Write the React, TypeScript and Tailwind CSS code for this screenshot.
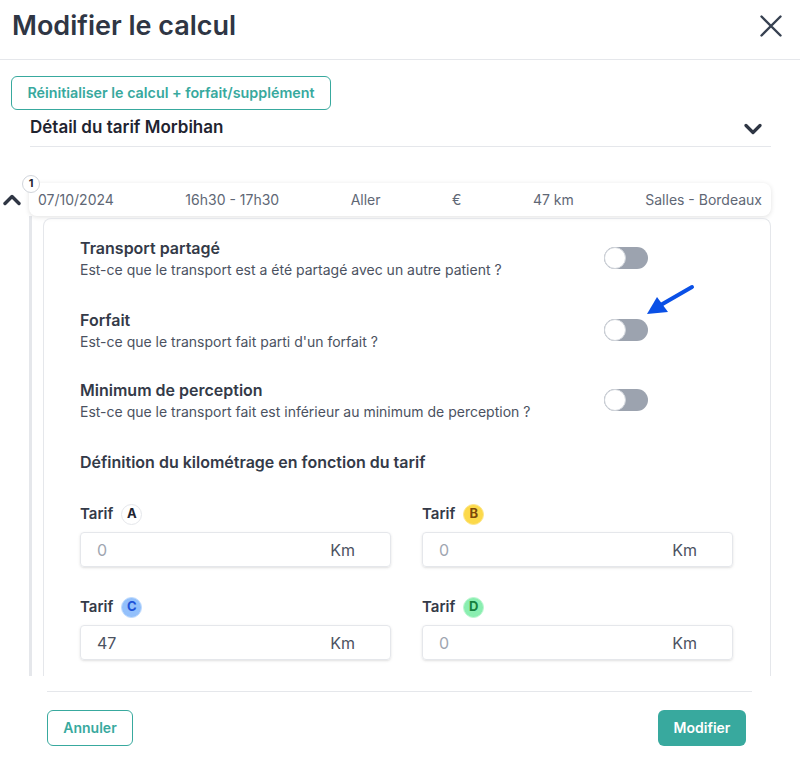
const font = { fontFamily: "Inter, 'Noto Sans', sans-serif" };

function Toggle() {
  return (
    <div className="relative h-[22px] w-[44px] shrink-0 rounded-full bg-[#9ca3af]">
      <div className="absolute left-0 top-0 h-[22px] w-[22px] rounded-full border border-[#d1d5db] bg-white" />
    </div>
  );
}

function OptionRow({ title, desc }: { title: string; desc: string }) {
  return (
    <div className="flex items-center">
      <div className="w-[524px]">
        <div className="text-base font-semibold leading-6 text-[#343a48]">{title}</div>
        <div className="text-sm leading-5 text-[#4b5261]">{desc}</div>
      </div>
      <Toggle />
    </div>
  );
}

function TarifField({
  letter,
  badge,
  value,
}: {
  letter: string;
  badge: string;
  value?: string;
}) {
  return (
    <div>
      <div className="flex h-[22px] items-center gap-2">
        <span className="text-[15px] font-semibold text-[#343a48]">Tarif</span>
        <span
          className={`flex h-[21px] w-[21px] items-center justify-center rounded-full border text-[13px] font-bold ${badge}`}
        >
          {letter}
        </span>
      </div>
      <div className="mt-[7px] flex h-[35px] items-center justify-between rounded border border-[#e5e7eb] pl-4 pr-[35px] shadow-sm">
        <span className={value ? "text-base text-[#4b5261]" : "text-base text-[#a0a6b1]"}>
          {value ?? "0"}
        </span>
        <span className="text-base text-[#4b5261]">Km</span>
      </div>
    </div>
  );
}

export default function App() {
  return (
    <div className="h-[766px] w-[800px] overflow-hidden bg-white" style={font}>
      <header className="flex h-[60px] items-start justify-between border-b border-[#e5e7eb] pl-3 pr-[18px] pt-[8px]">
        <h1 className="text-[27px] font-semibold leading-9 text-[#2f3644]">Modifier le calcul</h1>
        <svg className="mt-[7px]" width="22" height="22" viewBox="0 0 22 22">
          <path d="M1.5 1.5 L20.5 20.5 M20.5 1.5 L1.5 20.5" stroke="#374151" strokeWidth="2.4" strokeLinecap="round" />
        </svg>
      </header>

      <div className="h-[616px] overflow-hidden pt-4">
        <button className="ml-[11px] flex h-[34px] w-[320px] items-center justify-center rounded-md border border-[#38a99e] text-[14.3px] font-semibold text-[#38a99e]">
          Réinitialiser le calcul + forfait/supplément
        </button>

        <div className="ml-[30px] mr-[29px] flex h-[37px] items-center justify-between border-b border-[#e5e7eb] pr-[9px]">
          <span className="text-[17px] font-semibold text-[#1f2430]">Détail du tarif Morbihan</span>
          <svg className="mt-[2px]" width="18" height="12" viewBox="0 0 18 12">
            <path d="M2 2.5 L9 9.5 L16 2.5" fill="none" stroke="#2f3644" strokeWidth="3.2" strokeLinecap="round" strokeLinejoin="round" />
          </svg>
        </div>

        <div className="mt-[36px] flex">
          <div className="w-[29px] shrink-0 pl-[3px] pt-[11px]">
            <svg width="18" height="12" viewBox="0 0 18 12">
              <path d="M2 9.5 L9 2.5 L16 9.5" fill="none" stroke="#2f3644" strokeWidth="3.4" strokeLinecap="round" strokeLinejoin="round" />
            </svg>
          </div>
          <div className="mr-[29px] flex-1">
            <div className="relative flex h-[33px] items-center justify-between rounded-lg bg-white px-[9px] text-sm text-[#606775] shadow-[0_1px_5px_rgba(0,0,0,0.12)]">
              <span className="absolute -left-[7px] -top-[8px] flex h-[18px] w-[18px] items-center justify-center rounded-full border border-[#d1d5db] bg-white text-[11px] font-bold text-[#1f2430]">
                1
              </span>
              <span>07/10/2024</span>
              <span>16h30 - 17h30</span>
              <span>Aller</span>
              <span>€</span>
              <span>47 km</span>
              <span>Salles - Bordeaux</span>
            </div>

            <div className="flex">
              <div className="h-[460px] w-[3px] shrink-0 bg-[#e5e7eb]" />
              <div className="relative ml-[11px] mt-[2px] flex-1 rounded-t-lg border border-b-0 border-[#e5e7eb] pl-[36px] pr-[37px] pt-[17px]">
                <OptionRow
                  title="Transport partagé"
                  desc="Est-ce que le transport est a été partagé avec un autre patient ?"
                />
                <div className="mt-[28px]">
                  <OptionRow title="Forfait" desc="Est-ce que le transport fait parti d'un forfait ?" />
                </div>
                <div className="mt-[26px]">
                  <OptionRow
                    title="Minimum de perception"
                    desc="Est-ce que le transport fait est inférieur au minimum de perception ?"
                  />
                </div>

                <div className="mt-[28px] text-base font-semibold leading-6 text-[#343a48]">
                  Définition du kilométrage en fonction du tarif
                </div>

                <div className="mt-[29px] grid grid-cols-2 gap-x-[31px] gap-y-[29px]">
                  <TarifField letter="A" badge="border-[#e5e7eb] bg-white text-[#1f2430]" />
                  <TarifField letter="B" badge="border-[#fde68a] bg-[#fcd94a] text-[#7c4a0a]" />
                  <TarifField letter="C" value="47" badge="border-[#bfdbfe] bg-[#93c0fb] text-[#1e52d8]" />
                  <TarifField letter="D" badge="border-[#bbf7d0] bg-[#8aeeb0] text-[#15803d]" />
                </div>

                <svg
                  className="absolute left-[601px] top-[65px]"
                  width="50"
                  height="34"
                  viewBox="0 0 50 34"
                  fill="none"
                >
                  <line x1="47" y1="3" x2="14" y2="22" stroke="#0a50e6" strokeWidth="4" strokeLinecap="round" />
                  <polygon points="2,30 12,13 23,28" fill="#0a50e6" />
                </svg>
              </div>
            </div>
          </div>
        </div>
      </div>

      <footer className="ml-[47px] mr-[48px] mt-[15px] flex items-center justify-between border-t border-[#e5e7eb] pt-[18px]">
        <button className="h-[36px] w-[86px] rounded-md border border-[#38a99e] text-sm font-semibold text-[#38a99e]">
          Annuler
        </button>
        <button className="mr-[6px] h-[36px] w-[88px] rounded-md bg-[#38a99e] text-sm font-semibold text-white">
          Modifier
        </button>
      </footer>
    </div>
  );
}
